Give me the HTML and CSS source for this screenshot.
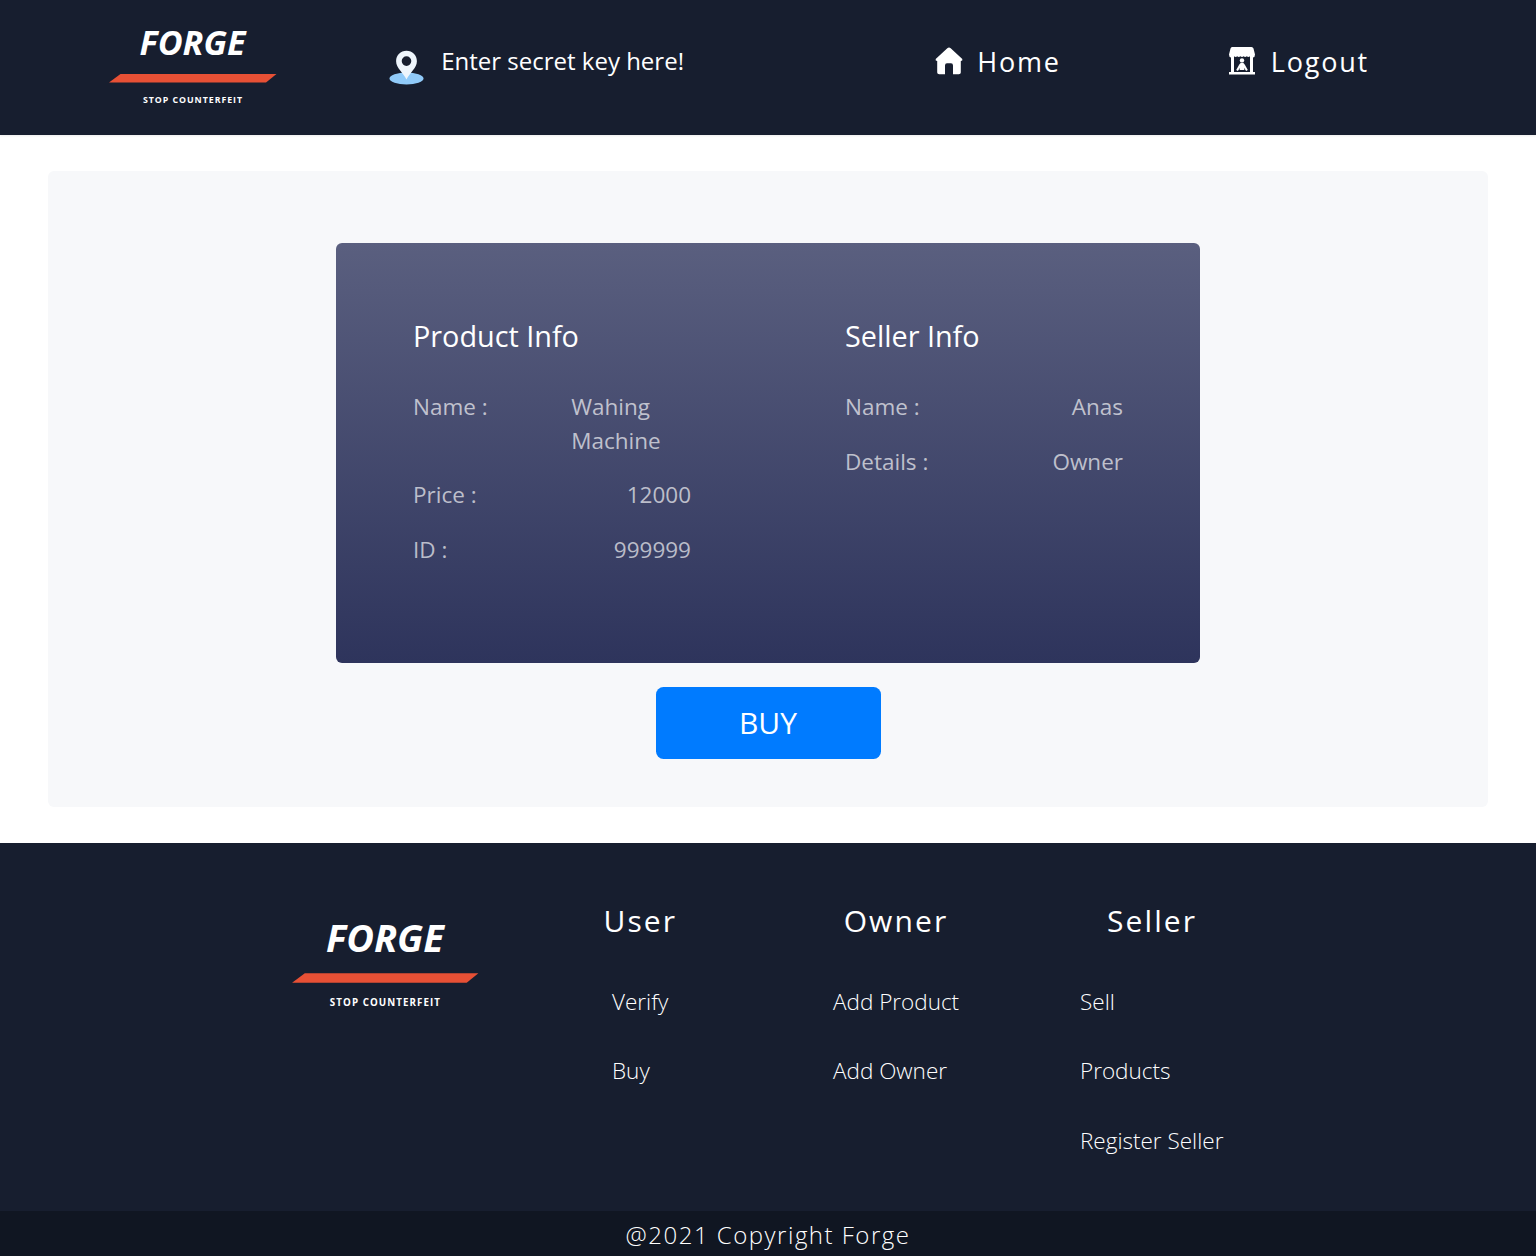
FILE: index.html
```html
<!DOCTYPE html>
<html lang="en">
<head>
<meta charset="utf-8">
<title>Forge</title>
<link rel="stylesheet" href="styles.css">
</head>
<body>
<header class="header">
  <svg class="logo" viewBox="0 0 168 80">
    <text class="logo-name" x="30.5" y="26.600" textLength="106" lengthAdjust="spacingAndGlyphs">FORGE</text>
    <path d="M11.500 46H167.500L157 54.500H0z" fill="#e75035"/>
    <text class="logo-tag" x="34" y="75.400" textLength="99">STOP COUNTERFEIT</text>
  </svg>
  <div class="key">
    <svg class="pin" viewBox="0 0 36 36">
      <ellipse cx="17.500" cy="28.400" rx="17" ry="6" fill="#90caf9"/>
      <path fill="#eef5fc" fill-rule="evenodd" d="M17.500.8C11.600.8 7.100 5.400 7.100 11.200c0 6.900 7.100 11.300 10.400 18.300 3.300-7 10.400-11.400 10.400-18.300C27.900 5.400 23.400.8 17.500.8zm0 5.500a4.800 4.800 0 1 1 0 9.600 4.800 4.800 0 0 1 0-9.600z"/>
    </svg>
    <span class="key-text">Enter secret key here!</span>
  </div>
  <a class="nav">
    <svg class="nav-icon" viewBox="0 0 28 28"><path fill="#fff" d="M12.300 1.200Q14 0 15.700 1.200L27.300 12Q28 13.800 25.800 14V25.500Q25.800 27.300 23.800 27.300H18V18.500Q18 16.200 16 16.200H12Q10 16.200 10 18.500V27.300H4.200Q2.200 27.300 2.200 25.500V14Q0 13.800.7 12z"/></svg>
    <span>Home</span>
  </a>
  <a class="nav">
    <svg class="nav-icon" viewBox="0 0 28 28"><path fill="#fff" d="M4 0H23.500Q25 0 25.500 1.500L27 7.500Q27 10.200 25 10.500V25H27V27.500H1V25H3V10.500Q1 10.200 1 7.500L2.500 1.500Q3 0 4 0z"/><path fill="#171e2f" d="M6 9.300q1.600 1.200 3.200 0q1.600 1.200 3.200 0q1.600 1.200 3.200 0q1.600 1.200 3.200 0q1.600 1.200 3.200 0V25H6z"/><circle cx="14" cy="13.400" r="2.200" fill="#fff"/><path fill="#fff" d="M14 15.800q2 0 3 2.200l2.800 5-1.700 1-2-3.300.3 2.300h-4.800l.3-2.300-2 3.300-1.700-1 2.800-5q1-2.200 3-2.200z"/></svg>
    <span>Logout</span>
  </a>
</header>
<main class="panel">
  <section class="card">
    <div class="info">
      <h2>Product Info</h2>
      <div class="row"><span>Name :</span><span class="wrap">Wahing Machine</span></div>
      <div class="row"><span>Price :</span><span>12000</span></div>
      <div class="row"><span>ID :</span><span>999999</span></div>
    </div>
    <div class="info">
      <h2>Seller Info</h2>
      <div class="row"><span>Name :</span><span>Anas</span></div>
      <div class="row"><span>Details :</span><span>Owner</span></div>
    </div>
  </section>
  <button class="buy">BUY</button>
</main>
<footer class="footer">
  <svg class="logo logo-large" viewBox="0 0 168 80">
    <text class="logo-name" x="30.5" y="27" textLength="106" lengthAdjust="spacingAndGlyphs">FORGE</text>
    <path d="M11.500 46H167.500L157 54.500H0z" fill="#e75035"/>
    <text class="logo-tag" x="34" y="75.600" textLength="99">STOP COUNTERFEIT</text>
  </svg>
  <div class="links user"><h3>User</h3><a>Verify</a><a>Buy</a></div>
  <div class="links owner"><h3>Owner</h3><a>Add Product</a><a>Add Owner</a></div>
  <div class="links seller"><h3>Seller</h3><a>Sell</a><a>Products</a><a>Register Seller</a></div>
</footer>
<div class="copyright">@2021 Copyright Forge</div>
</body>
</html>
```
FILE: styles.css
```css
* { box-sizing: border-box; }
body {
  margin: 0;
  background: #fff;
  color: #fff;
  font-family: "Open Sans", sans-serif;
}
h2, h3 { margin: 0; font-weight: 400; }
.logo { display: block; width: 168px; height: 80px; overflow: visible; }
.logo-name { font: italic 700 34.500px "Open Sans", sans-serif; fill: #fff; }
.logo-tag { font: 700 8.800px "Open Sans", sans-serif; fill: #fff; }

.header {
  display: grid;
  grid-template-columns: 280px 545.500px 293.500px auto;
  height: 135px;
  padding: 28px 0 0 109px;
  background: #171e2f;
  box-shadow: 0 1px 2px rgba(0, 0, 0, .08);
}
.key { display: flex; gap: 16.200px; padding-top: 17px; }
.pin { width: 36px; height: 36px; margin-top: 5px; }
.key-text { font-size: 24px; line-height: 32px; }
.nav {
  display: flex;
  gap: 14.800px;
  padding-top: 18px;
  font-size: 27px;
  line-height: 32px;
  letter-spacing: 1.800px;
}
.nav-icon { width: 28px; height: 28px; margin-top: 1px; }

.panel {
  height: 636px;
  margin: 36px 48px;
  padding-top: 72px;
  border-radius: 6px;
  background: #f7f8fa;
}
.card {
  display: grid;
  grid-template-columns: 278px 278px;
  column-gap: 154px;
  width: 864px;
  height: 420px;
  margin: 0 auto 24px;
  padding: 75px 77px 0;
  border-radius: 6px;
  background: linear-gradient(#5a5f7f, #2e345c);
}
.card h2 { margin-bottom: 35.900px; font-size: 28.800px; line-height: 36px; }
.row {
  display: flex;
  justify-content: space-between;
  margin-bottom: 20.950px;
  color: rgba(255, 255, 255, .66);
  font-size: 22.500px;
  line-height: 33.750px;
}
.wrap { width: 119.800px; }
.buy {
  display: block;
  width: 225px;
  height: 72px;
  margin: 0 auto;
  padding: 0;
  border: 0;
  border-radius: 7.500px;
  background: #007bff;
  color: #fff;
  font: 400 30px/72px "Open Sans", sans-serif;
}

.footer {
  display: grid;
  grid-template-columns: 312px 229.500px 247px auto;
  height: 368px;
  padding: 58px 0 0 291.500px;
  background: #171e2f;
}
.logo-large { width: 187px; height: 89px; margin-top: 21px; }
.links { display: flex; flex-direction: column; }
.links h3 { margin-bottom: 43.900px; font-size: 30px; line-height: 40px; letter-spacing: 2.100px; }
.links a {
  margin-bottom: 35.500px;
  font-size: 22.500px;
  font-weight: 300;
  line-height: 34px;
}
.user a { padding-left: 8.500px; }
.owner h3 { padding-left: 10.700px; }
.seller h3 { padding-left: 27px; }
.copyright {
  height: 45px;
  background: #101622;
  font-size: 24px;
  font-weight: 300;
  line-height: 48px;
  letter-spacing: 1.500px;
  text-align: center;
}
```
